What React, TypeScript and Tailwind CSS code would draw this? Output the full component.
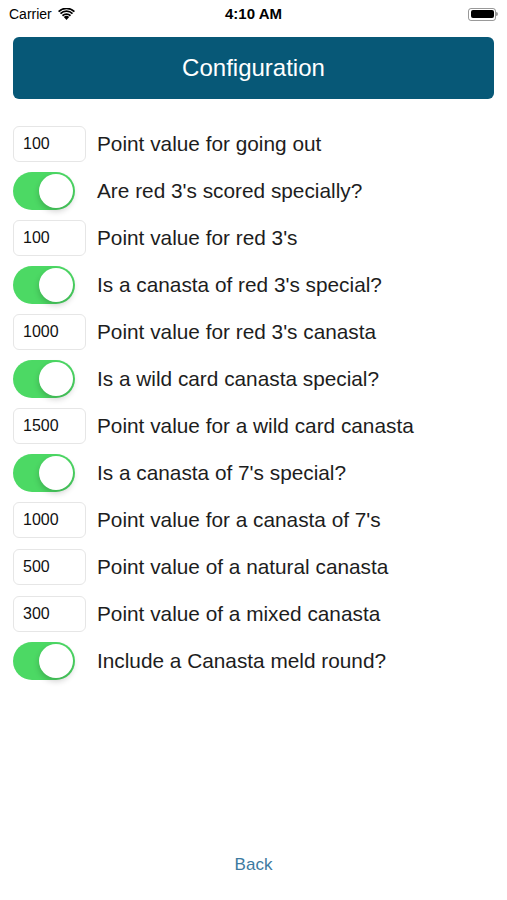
const rows: { kind: 'field' | 'toggle'; value?: string; label: string }[] = [
  { kind: 'field', value: '100', label: 'Point value for going out' },
  { kind: 'toggle', label: "Are red 3's scored specially?" },
  { kind: 'field', value: '100', label: "Point value for red 3's" },
  { kind: 'toggle', label: "Is a canasta of red 3's special?" },
  { kind: 'field', value: '1000', label: "Point value for red 3's canasta" },
  { kind: 'toggle', label: 'Is a wild card canasta special?' },
  { kind: 'field', value: '1500', label: 'Point value for a wild card canasta' },
  { kind: 'toggle', label: "Is a canasta of 7's special?" },
  { kind: 'field', value: '1000', label: "Point value for a canasta of 7's" },
  { kind: 'field', value: '500', label: 'Point value of a natural canasta' },
  { kind: 'field', value: '300', label: 'Point value of a mixed canasta' },
  { kind: 'toggle', label: 'Include a Canasta meld round?' },
]

function StatusBar() {
  return (
    <div className="h-[28px] px-[9px] flex items-center justify-between text-black">
      <div className="flex items-center gap-[6px] text-[14px]">
        <span>Carrier</span>
        <svg width="17" height="12" viewBox="0 0 17 12">
          <path d="M8.5 12 L5.8 9.1 A3.9 3.9 0 0 1 11.2 9.1 Z" fill="#000" />
          <path d="M3.9 7.1 A6.6 6.6 0 0 1 13.1 7.1 L11.9 8.4 A4.9 4.9 0 0 0 5.1 8.4 Z" fill="#000" />
          <path d="M1.9 5 A9.4 9.4 0 0 1 15.1 5 L13.9 6.3 A7.7 7.7 0 0 0 3.1 6.3 Z" fill="#000" />
          <path d="M0 3 A12.2 12.2 0 0 1 17 3 L15.8 4.3 A10.5 10.5 0 0 0 1.2 4.3 Z" fill="#000" />
        </svg>
      </div>
      <span className="text-[15px] font-semibold absolute left-1/2 -translate-x-1/2">4:10 AM</span>
      <div className="flex items-center">
        <div className="w-[28px] h-[13px] rounded-[3px] border border-black/40 p-[1.5px]">
          <div className="w-full h-full bg-black rounded-[2px]" />
        </div>
        <div className="w-[2px] h-[4px] bg-black/40 rounded-r-sm" />
      </div>
    </div>
  )
}

function Toggle() {
  return (
    <div className="w-[62px] h-[38px] rounded-full bg-[#4cd964] relative shrink-0">
      <div className="absolute right-[2px] top-[2px] w-[34px] h-[34px] rounded-full bg-white shadow-[0_3px_6px_rgba(0,0,0,0.2)]" />
    </div>
  )
}

export default function App() {
  return (
    <div
      className="relative h-[900px] bg-white flex flex-col text-[#1d1d1d]"
      style={{ fontFamily: '"Liberation Sans", Arial, sans-serif' }}
    >
      <StatusBar />
      <div className="px-[13px] mt-[9px]">
        <div className="h-[62px] rounded-[6px] bg-[#075877] flex items-center justify-center text-white text-[24px]">
          Configuration
        </div>
      </div>
      <div className="px-[13px] mt-[26px] flex flex-col gap-[9px]">
        {rows.map((r, i) => (
          <div key={i} className="h-[38px] flex items-center gap-[11px]">
            {r.kind === 'field' ? (
              <div className="w-[73px] h-[36px] shrink-0 rounded-[6px] border border-[#e6e6e6] flex items-center pl-[9px] text-[16px] text-[#111]">
                {r.value}
              </div>
            ) : (
              <Toggle />
            )}
            <span className={`text-[20.8px] ${r.kind === 'toggle' ? 'ml-[11px]' : ''}`}>{r.label}</span>
          </div>
        ))}
      </div>
      <div className="mt-auto pb-[23px] flex justify-center">
        <span className="text-[17px] text-[#3d7aa0]">Back</span>
      </div>
    </div>
  )
}
